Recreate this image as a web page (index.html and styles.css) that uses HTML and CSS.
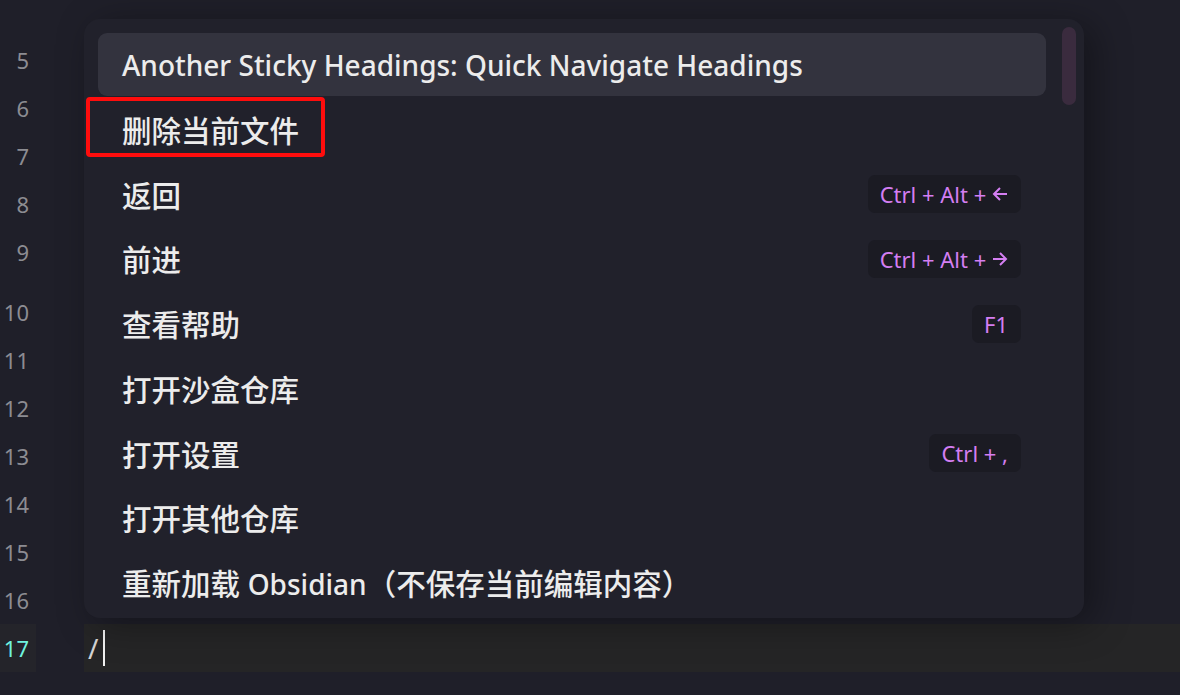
FILE: index.html
```html
<!DOCTYPE html>
<html lang="zh">
<head>
    <meta charset="UTF-8">
    <title>命令面板</title>
    <link rel="stylesheet" href="styles.css">
</head>
<body>
<div class="editor">
    <div class="line"><span class="num">5</span><span class="text"></span></div>
    <div class="line"><span class="num">6</span><span class="text"></span></div>
    <div class="line"><span class="num">7</span><span class="text"></span></div>
    <div class="line"><span class="num">8</span><span class="text"></span></div>
    <div class="line tall"><span class="num">9</span><span class="text"></span></div>
    <div class="line"><span class="num">10</span><span class="text"></span></div>
    <div class="line"><span class="num">11</span><span class="text"></span></div>
    <div class="line"><span class="num">12</span><span class="text"></span></div>
    <div class="line"><span class="num">13</span><span class="text"></span></div>
    <div class="line"><span class="num">14</span><span class="text"></span></div>
    <div class="line"><span class="num">15</span><span class="text"></span></div>
    <div class="line"><span class="num">16</span><span class="text"></span></div>
    <div class="line active"><span class="num">17</span><span class="text">/<i class="caret"></i></span></div>
</div>

<div class="suggest">
    <ul class="list">
        <li class="item selected"><span class="label lat">Another Sticky Headings: Quick Navigate Headings</span></li>
        <li class="item"><span class="label">删除当前文件</span></li>
        <li class="item"><span class="label">返回</span><kbd>Ctrl + Alt + <svg class="arrow" viewBox="0 0 16 14"><path d="M15 7H2M8 1L2 7l6 6"/></svg></kbd></li>
        <li class="item"><span class="label">前进</span><kbd>Ctrl + Alt + <svg class="arrow" viewBox="0 0 16 14"><path d="M1 7h13M8 1l6 6-6 6"/></svg></kbd></li>
        <li class="item"><span class="label">查看帮助</span><kbd>F1</kbd></li>
        <li class="item"><span class="label">打开沙盒仓库</span></li>
        <li class="item"><span class="label">打开设置</span><kbd>Ctrl + ,</kbd></li>
        <li class="item"><span class="label">打开其他仓库</span></li>
        <li class="item"><span class="label">重新加载 <span class="lat">Obsidian</span>（不保存当前编辑内容）</span></li>
    </ul>
    <div class="scrollbar"></div>
    <div class="mark"></div>
</div>
</body>
</html>
```

FILE: styles.css
```css
* {
    padding: 0;
    margin: 0;
    list-style: none;
    box-sizing: border-box;
}

body {
    width: 1180px;
    height: 695px;
    overflow: hidden;
    background: #1f1f29;
    font-family: "Noto Sans", "Noto Sans CJK SC", sans-serif;
    position: relative;
}

/* 编辑区 */
.editor {
    padding-top: 36px;
}

.line {
    display: flex;
    height: 48px;
    gap: 48px;
}

.line.tall {
    height: 60px;
}

.num {
    width: 36px;
    padding-right: 7px;
    text-align: right;
    font-size: 22px;
    line-height: 48px;
    color: #8c8c92;
}

.text {
    flex: 1;
    display: flex;
    align-items: center;
    padding-left: 4px;
    font-size: 28px;
    color: #d4d4d4;
}

.line.active .num {
    background: #24242a;
    color: #6ff3df;
}

.line.active .text {
    background: #252526;
}

.caret {
    display: inline-block;
    width: 2px;
    height: 36px;
    margin-left: 5px;
    background: #f0f0f0;
}

/* 命令面板 */
.suggest {
    position: absolute;
    left: 84px;
    top: 19px;
    width: 1000px;
    height: 599px;
    background: #21212b;
    border-radius: 16px;
    box-shadow: 10px 6px 36px rgba(0, 0, 0, 0.35);
    padding: 14px 38px 0 14px;
    overflow: hidden;
}

.list {
    display: flex;
    flex-direction: column;
    gap: 1.75px;
}

.item {
    height: 63px;
    flex-shrink: 0;
    display: flex;
    align-items: center;
    padding: 0 25px 0 24px;
    border-radius: 9px;
    font-size: 29.5px;
    font-weight: 500;
    color: #ececec;
    white-space: nowrap;
}

.item.selected {
    background: #33333e;
}

.lat {
    font-size: 28px;
}

kbd {
    margin-left: auto;
    height: 38px;
    padding: 0 13px 0 12px;
    display: flex;
    align-items: center;
    gap: 0;
    background: #1b1b23;
    border-radius: 7px;
    font-family: "Noto Sans", sans-serif;
    font-size: 22px;
    font-weight: 400;
    color: #d47ef2;
    white-space: pre;
}

.arrow {
    width: 16px;
    height: 14px;
    fill: none;
    stroke: #d47ef2;
    stroke-width: 2;
}

.scrollbar {
    position: absolute;
    right: 8px;
    top: 8px;
    width: 14px;
    height: 78px;
    border-radius: 7px;
    background: #3a2b3e;
}

/* 红框标注 */
.mark {
    position: absolute;
    left: 2px;
    top: 78px;
    width: 239px;
    height: 60px;
    border: 4px solid #ff0d0d;
    border-radius: 4px;
}
```
